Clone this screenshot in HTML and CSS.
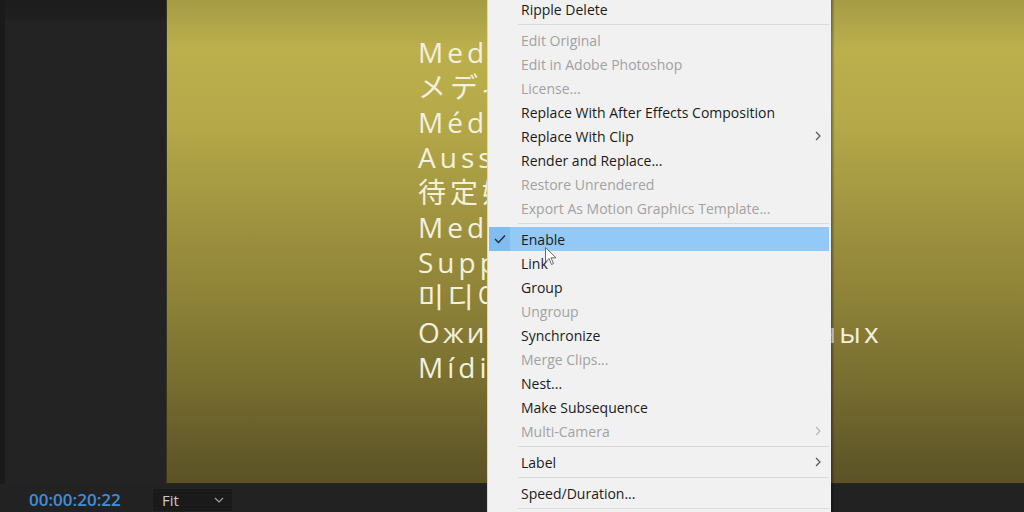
FILE: index.html
```html
<!DOCTYPE html>
<html>
<head>
<meta charset="utf-8">
<link rel="stylesheet" href="styles.css">
</head>
<body>
<div class="app">
  <div class="main">
    <aside class="left"></aside>
    <section class="video">
      <div class="caption">
        <div class="line">Media Pending</div>
        <div class="line">メディア保留中</div>
        <div class="line">Médias en attente</div>
        <div class="line">Ausstehende Medien</div>
        <div class="line">待定媒体</div>
        <div class="line">Medios pendientes</div>
        <div class="line">Supporto in sospeso</div>
        <div class="line">미디어 보류 중</div>
        <div class="line ru">Ожидание мультимедийных</div>
        <div class="line">Mídia pendente</div>
      </div>
    </section>
  </div>
  <footer class="bar">
    <span class="tc">00:00:20:22</span>
    <div class="fit"><span>Fit</span><svg class="chev" viewBox="0 0 10 6" width="10" height="6"><path d="M1 1 L5 5 L9 1" fill="none" stroke="#a0a0a0" stroke-width="1.2"/></svg></div>
  </footer>

  <div class="menu">
    <div class="item">Ripple Delete</div>
    <div class="sep"></div>
    <div class="item dis">Edit Original</div>
    <div class="item dis">Edit in Adobe Photoshop</div>
    <div class="item dis">License...</div>
    <div class="item">Replace With After Effects Composition</div>
    <div class="item sub">Replace With Clip<svg class="arr" viewBox="0 0 6 10" width="6" height="10"><path d="M1 1 L5 5 L1 9" fill="none" stroke="#555" stroke-width="1.2"/></svg></div>
    <div class="item">Render and Replace...</div>
    <div class="item dis">Restore Unrendered</div>
    <div class="item dis">Export As Motion Graphics Template...</div>
    <div class="sep"></div>
    <div class="item on"><span class="chk"><svg viewBox="0 0 12 10" width="12" height="10"><path d="M1 5 L4.5 8.5 L11 1.5" fill="none" stroke="#1d2a38" stroke-width="1.4"/></svg></span>Enable</div>
    <div class="item">Link</div>
    <div class="item">Group</div>
    <div class="item dis">Ungroup</div>
    <div class="item">Synchronize</div>
    <div class="item dis">Merge Clips...</div>
    <div class="item">Nest...</div>
    <div class="item">Make Subsequence</div>
    <div class="item dis sub">Multi-Camera<svg class="arr" viewBox="0 0 6 10" width="6" height="10"><path d="M1 1 L5 5 L1 9" fill="none" stroke="#b5b5b5" stroke-width="1.2"/></svg></div>
    <div class="sep"></div>
    <div class="item sub">Label<svg class="arr" viewBox="0 0 6 10" width="6" height="10"><path d="M1 1 L5 5 L1 9" fill="none" stroke="#555" stroke-width="1.2"/></svg></div>
    <div class="sep"></div>
    <div class="item">Speed/Duration...</div>
    <div class="sep"></div>
  </div>

  <svg class="cursor" viewBox="0 0 12 19" width="12" height="19"><path d="M0.5 0.5 L0.5 15 L4 11.5 L6.5 17.5 L8.5 16.6 L6 10.8 L11 10.8 Z" fill="#ffffff" stroke="#6a6a6a" stroke-width="1"/></svg>
</div>
</body>
</html>
```

FILE: styles.css
```css
* { box-sizing: border-box; }
html, body { margin: 0; padding: 0; }
body {
  width: 1024px;
  height: 512px;
  overflow: hidden;
  background: #222222;
  font-family: "Open Sans", "Noto Sans", sans-serif;
}
.app {
  position: relative;
  width: 1024px;
  height: 512px;
  display: flex;
  flex-direction: column;
}
.main {
  display: flex;
  height: 484px;
}
.left {
  width: 166px;
  background: linear-gradient(to bottom, #1d1d1d 0, #1f1f1f 18px, #232323 22px, #232323 100%);
  border-left: 5px solid #1a1a1a;
}
.video {
  flex: 1;
  background: linear-gradient(to bottom,
    #a59b45 0px,
    #bcb04d 50px,
    #b3a748 130px,
    #a19541 210px,
    #8f8438 290px,
    #7b7131 370px,
    #665d2b 440px,
    #5b5227 484px);
  border-left: 1px solid #3a3619;
  border-bottom: 1px solid #2a2814;
  overflow: hidden;
}
.caption {
  padding: 35px 0 0 251px;
  color: #f3f0de;
  font-family: "Open Sans", "Noto Sans CJK JP", sans-serif;
  font-size: 28px;
  letter-spacing: 4px;
}
.line {
  height: 35px;
  line-height: 35px;
  white-space: nowrap;
}
.ru { letter-spacing: 3.2px; }
.bar {
  flex: 1;
  display: flex;
  align-items: center;
  background: #222222;
  padding-left: 29px;
}
.tc {
  color: #3f8fdc;
  font-size: 17px;
  font-weight: 600;
  width: 124px;
  padding-top: 3px;
}
.fit {
  width: 79px;
  height: 22px;
  margin-top: 4px;
  background: #1a1a1a;
  display: flex;
  align-items: center;
  justify-content: space-between;
  padding: 0 8px 0 9px;
  color: #c9c9c9;
  font-size: 15px;
}
.menu {
  position: absolute;
  left: 487px;
  top: -3px;
  width: 344px;
  background: #f1f1f1;
  border-left: 1px solid #d6d6d0;
  box-shadow: 2px 0 2px rgba(0,0,0,0.35);
  color: #1b1b1b;
  font-size: 14px;
  padding-bottom: 4px;
}
.item {
  position: relative;
  height: 24px;
  display: flex;
  align-items: center;
  padding-left: 33px;
  white-space: nowrap;
}
.dis { color: #a2a2a2; }
.sub .arr {
  position: absolute;
  right: 10px;
  top: 7px;
}
.on {
  background: #92c9f6;
  margin: 0 2px 0 1px;
  padding-left: 32px;
}
.chk {
  position: absolute;
  left: 0;
  top: 0;
  width: 21px;
  height: 24px;
  background: #80bdf1;
  display: flex;
  align-items: center;
  justify-content: center;
}
.sep {
  height: 7px;
  display: flex;
  align-items: center;
  padding: 0 2px 0 30px;
}
.sep::after {
  content: "";
  flex: 1;
  border-top: 1px solid #dadada;
}
.cursor {
  position: absolute;
  left: 545px;
  top: 247px;
}
```
